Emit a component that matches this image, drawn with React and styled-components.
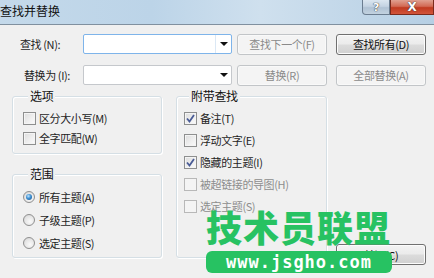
import React from 'react';
import styled, { createGlobalStyle } from 'styled-components';

const GlobalStyle = createGlobalStyle`
  html, body { margin: 0; padding: 0; background: #f0f0f0; }
  body {
    font-family: "Noto Sans CJK SC", "Noto Sans", sans-serif;
    font-size: 11px;
    letter-spacing: -0.4px;
    color: #1e1e1e;
  }
`;

const Dialog = styled.div`
  position: relative;
  width: 434px;
  height: 278px;
  overflow: hidden;
  background: #f0f0f0;
`;

const TitleBar = styled.div`
  height: 24px;
  display: flex;
  justify-content: space-between;
  align-items: flex-start;
  background: linear-gradient(90deg, #c4d9ea 0%, #bcd4e8 35%, #cfe0ee 60%, #b6cfe4 100%);
  border-bottom: 1px solid #80909f;
`;

const Title = styled.div`
  font-size: 12px;
  letter-spacing: 0;
  line-height: 16px;
  padding-top: 3px;
  color: #111;
`;

const Caption = styled.div`
  display: flex;
`;

const CaptionButton = styled.div`
  width: ${p => p.$w}px;
  height: 15px;
  box-sizing: border-box;
  display: flex;
  align-items: center;
  justify-content: center;
  font-family: "DejaVu Sans", sans-serif;
  font-weight: bold;
  font-size: ${p => p.$close ? 12 : 11}px;
  color: #fff;
  text-shadow: 0 0 1px #333, 0 0 1px #333;
  border: 1px solid ${p => p.$close ? '#7a2a1c' : '#6b7d90'};
  border-top: none;
  border-radius: ${p => p.$close ? '0' : '0 0 0 4px'};
  background: ${p => p.$close
    ? 'linear-gradient(#e0a090 0%, #d26a55 45%, #c03a20 55%, #d2553b 100%)'
    : 'linear-gradient(#dbe6f0 0%, #c4d3e2 45%, #b0c2d4 55%, #c2d2e0 100%)'};
`;

const Body = styled.div`
  padding-top: 9px;
`;

const FormRow = styled.div`
  display: flex;
  align-items: center;
  height: 20px;
  margin-bottom: 11px;
`;

const Label = styled.div`
  width: 83px;
  box-sizing: border-box;
  padding-left: ${p => p.$indent}px;
  white-space: nowrap;
`;

const Combo = styled.div`
  width: 149px;
  height: 20px;
  box-sizing: border-box;
  background: #fff;
  border: 1px solid ${p => p.$focus ? '#7eb4ea' : '#c5c8cc'};
  border-radius: 2px;
  display: flex;
  justify-content: flex-end;
`;

const ComboArrow = styled.div`
  width: 15px;
  display: flex;
  align-items: center;
  justify-content: center;
  border-left: 1px solid ${p => p.$focus ? '#dbe8f5' : 'transparent'};
  &::after {
    content: "";
    border-left: 4px solid transparent;
    border-right: 4px solid transparent;
    border-top: 4px solid #111;
  }
`;

const Button = styled.div`
  width: 90px;
  height: 21px;
  box-sizing: border-box;
  margin-left: ${p => p.$gap}px;
  display: flex;
  align-items: center;
  justify-content: center;
  border-radius: 3px;
  white-space: nowrap;
  border: 1px solid ${p => p.$disabled ? '#c2c5c8' : '#707070'};
  color: ${p => p.$disabled ? '#8a8a8a' : '#111'};
  background: ${p => p.$disabled
    ? '#f4f4f4'
    : 'linear-gradient(#f3f3f3 0%, #ebebeb 48%, #dcdcdc 52%, #d0d0d0 100%)'};
  box-shadow: inset 0 0 0 1px ${p => p.$disabled ? '#f9f9f9' : '#fcfcfc'};
`;

const Panels = styled.div`
  display: flex;
  padding-left: 12px;
  margin-top: 9px;
`;

const Column = styled.div`
  display: flex;
  flex-direction: column;
  gap: 20px;
`;

const Group = styled.div`
  width: ${p => p.$w}px;
  height: ${p => p.$h}px;
  margin-left: ${p => p.$gap || 0}px;
  box-sizing: border-box;
  border: 1px solid #d5dfe5;
  border-radius: 3px;
  box-shadow: inset 1px 1px 0 #fff, 1px 1px 0 #fff;
  padding-left: ${p => p.$pad}px;
`;

const Legend = styled.div`
  display: table;
  margin: -9px 0 ${p => p.$after}px ${p => p.$offset}px;
  padding: 0 2px;
  line-height: 16px;
  font-size: 12px;
  letter-spacing: -0.3px;
  background: #f0f0f0;
  color: #111;
`;

const OptionRow = styled.div`
  display: flex;
  align-items: center;
  height: ${p => p.$h}px;
  color: ${p => p.$disabled ? '#8d8d8d' : '#1e1e1e'};
  white-space: nowrap;
`;

const Box = styled.div`
  width: 13px;
  height: 13px;
  box-sizing: border-box;
  margin-right: 3px;
  border: 1px solid ${p => p.$disabled ? '#b8b8b8' : '#8e8f8f'};
  background: ${p => p.$disabled
    ? '#f4f4f4'
    : 'linear-gradient(135deg, #dcdcdc 0%, #f0f0f0 60%, #fbfbfb 100%)'};
  box-shadow: inset 0 0 0 1px #f4f4f4;
  display: flex;
  align-items: center;
  justify-content: center;
`;

const Radio = styled.div`
  width: 12px;
  height: 12px;
  box-sizing: border-box;
  margin-right: 4px;
  border-radius: 50%;
  border: 1px solid #8f8f8f;
  background: radial-gradient(circle at 60% 65%, #fafafa 0%, #e6e6e6 55%, #cfcfcf 100%);
  display: flex;
  align-items: center;
  justify-content: center;
  &::after {
    content: "";
    display: ${p => p.$on ? 'block' : 'none'};
    width: 6px;
    height: 6px;
    border-radius: 50%;
    background: radial-gradient(circle at 40% 35%, #bde4ff 0%, #3d8fd1 45%, #1a4e86 100%);
  }
`;

const CloseColumn = styled.div`
  margin-left: 9px;
  display: flex;
  align-items: flex-end;
  height: 162px;
  margin-top: 8px;
  padding-bottom: 1px;
  box-sizing: border-box;
`;

const Watermark = styled.div`
  position: absolute;
  left: 206px;
  top: 206px;
  width: 186px;
  display: flex;
  flex-direction: column;
  align-items: stretch;
  gap: 5px;
  pointer-events: none;
`;

const MarkText = styled.div`
  font-family: "Noto Sans CJK SC", sans-serif;
  font-weight: 900;
  font-size: 36px;
  line-height: 40px;
  color: #27c262;
  letter-spacing: 1px;
  white-space: nowrap;
`;

const MarkUrl = styled.div`
  height: 22px;
  border-radius: 6px;
  background: #27c262;
  color: #fff;
  font-family: "DejaVu Sans Mono", monospace;
  font-weight: bold;
  font-size: 17px;
  letter-spacing: 1px;
  display: flex;
  align-items: center;
  justify-content: center;
`;

const Check = () => (
  <svg width="9" height="9" viewBox="0 0 9 9">
    <path d="M1 4.5 L3.5 7.5 L8 1" fill="none" stroke="#4a5c96" strokeWidth="1.8" />
  </svg>
);

const CheckOption = ({ label, checked, disabled }) => (
  <OptionRow $h={22} $disabled={disabled}>
    <Box $disabled={disabled}>{checked && <Check />}</Box>
    {label}
  </OptionRow>
);

export default function App() {
  return (
    <Dialog>
      <GlobalStyle />
      <TitleBar>
        <Title>查找并替换</Title>
        <Caption>
          <CaptionButton $w={28}>?</CaptionButton>
          <CaptionButton $w={44} $close>X</CaptionButton>
        </Caption>
      </TitleBar>
      <Body>
        <FormRow>
          <Label $indent={20}>查找 (N):</Label>
          <Combo $focus><ComboArrow $focus /></Combo>
          <Button $gap={5} $disabled>查找下一个(F)</Button>
          <Button $gap={9}>查找所有(D)</Button>
        </FormRow>
        <FormRow>
          <Label $indent={24}>替换为 (I):</Label>
          <Combo><ComboArrow /></Combo>
          <Button $gap={5} $disabled>替换(R)</Button>
          <Button $gap={9} $disabled>全部替换(A)</Button>
        </FormRow>
        <Panels>
          <Column>
            <Group $w={150} $h={58} $pad={10}>
              <Legend $offset={5} $after={4}>选项</Legend>
              <OptionRow $h={20}><Box />区分大小写(M)</OptionRow>
              <OptionRow $h={20}><Box />全字匹配(W)</OptionRow>
            </Group>
            <Group $w={150} $h={84} $pad={10}>
              <Legend $offset={5} $after={3}>范围</Legend>
              <OptionRow $h={23}><Radio $on />所有主题(A)</OptionRow>
              <OptionRow $h={23}><Radio />子级主题(P)</OptionRow>
              <OptionRow $h={23}><Radio />选定主题(S)</OptionRow>
            </Group>
          </Column>
          <Group $w={151} $h={162} $pad={7} $gap={14}>
            <Legend $offset={5} $after={3}>附带查找</Legend>
            <CheckOption label="备注(T)" checked />
            <CheckOption label="浮动文字(E)" />
            <CheckOption label="隐藏的主题(I)" checked />
            <CheckOption label="被超链接的导图(H)" disabled />
            <CheckOption label="选定主题(S)" disabled />
          </Group>
          <CloseColumn>
            <Button $gap={0}>关闭(C)</Button>
          </CloseColumn>
        </Panels>
      </Body>
      <Watermark>
        <MarkText>技术员联盟</MarkText>
        <MarkUrl>www.jsgho.com</MarkUrl>
      </Watermark>
    </Dialog>
  );
}
